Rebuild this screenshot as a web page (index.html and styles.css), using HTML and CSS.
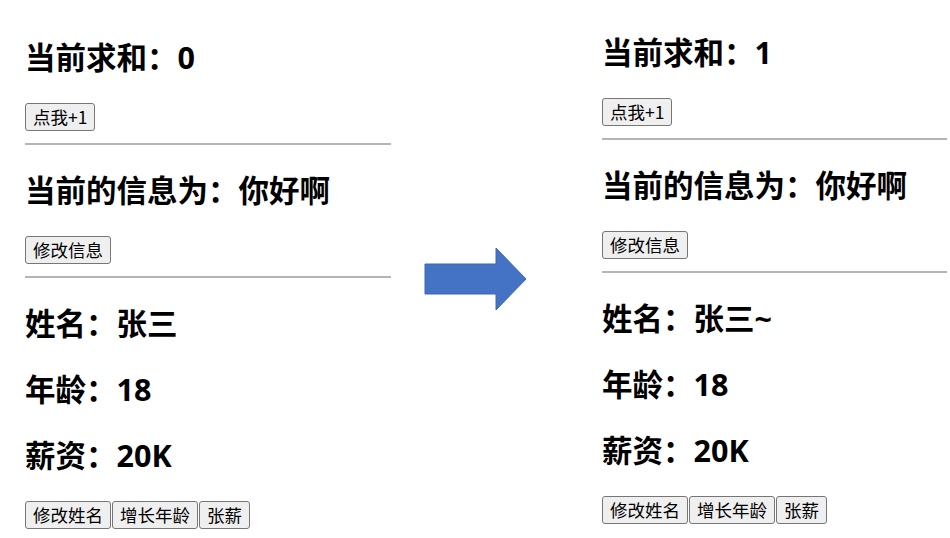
FILE: index.html
```html
<!DOCTYPE html>
<html lang="zh-CN">
<head>
    <meta charset="UTF-8">
    <meta name="viewport" content="width=device-width, initial-scale=1.0">
    <title>求和与信息 - 修改前后</title>
    <link rel="stylesheet" href="styles.css">
</head>
<body>
    <div class="compare">
        <!-- before click -->
        <section class="panel panel-before">
            <h2>当前求和：0</h2>
            <button class="btn">点我+1</button>
            <hr>
            <h2>当前的信息为：你好啊</h2>
            <button class="btn">修改信息</button>
            <hr>
            <h2>姓名：张三</h2>
            <h2>年龄：18</h2>
            <h2>薪资：20K</h2>
            <div class="btn-row"><button class="btn">修改姓名</button><button class="btn">增长年龄</button><button class="btn">张薪</button></div>
        </section>

        <div class="arrow">
            <svg width="104" height="66" viewBox="0 0 104 66">
                <polygon points="1,17 72,17 72,1 102,32 72,63 72,47 1,47" fill="#4472c4" stroke="#3c67b5" stroke-width="1"/>
            </svg>
        </div>

        <!-- after click -->
        <section class="panel panel-after">
            <h2>当前求和：1</h2>
            <button class="btn">点我+1</button>
            <hr>
            <h2>当前的信息为：你好啊</h2>
            <button class="btn">修改信息</button>
            <hr>
            <h2>姓名：张三~</h2>
            <h2>年龄：18</h2>
            <h2>薪资：20K</h2>
            <div class="btn-row"><button class="btn">修改姓名</button><button class="btn">增长年龄</button><button class="btn">张薪</button></div>
        </section>
    </div>
</body>
</html>
```

FILE: styles.css
```css
body {
    margin: 0;
    padding: 0;
    background: #fff;
    color: #000;
    font-family: "Open Sans", "Noto Sans CJK SC", sans-serif;
}

.compare {
    display: flex;
    align-items: flex-start;
}

.panel h2 {
    font-size: 30.5px;
    font-weight: bold;
    line-height: 41px;
    margin: 25px 0;
}

.panel hr {
    height: 0;
    border: none;
    border-top: 2px solid #b4b4b4;
    margin: 12px 0 0 0;
}

.panel-before {
    width: 366px;
    margin-left: 25px;
    padding-top: 12px;
}

.panel-after {
    width: 345px;
    margin-left: 74px;
    padding-top: 7px;
}

.arrow {
    margin-left: 33px;
    margin-top: 247px;
    line-height: 0;
}

.btn {
    font-family: "Noto Sans CJK SC", sans-serif;
    font-size: 17.5px;
    line-height: 24px;
    color: #000;
    background: #efefef;
    border: 1px solid #767676;
    border-radius: 3px;
    padding: 1px 7px;
    margin: 0;
    cursor: pointer;
}

.btn:hover {
    background: #e5e5e5;
}

.btn-row {
    display: flex;
    gap: 1px;
}
```
